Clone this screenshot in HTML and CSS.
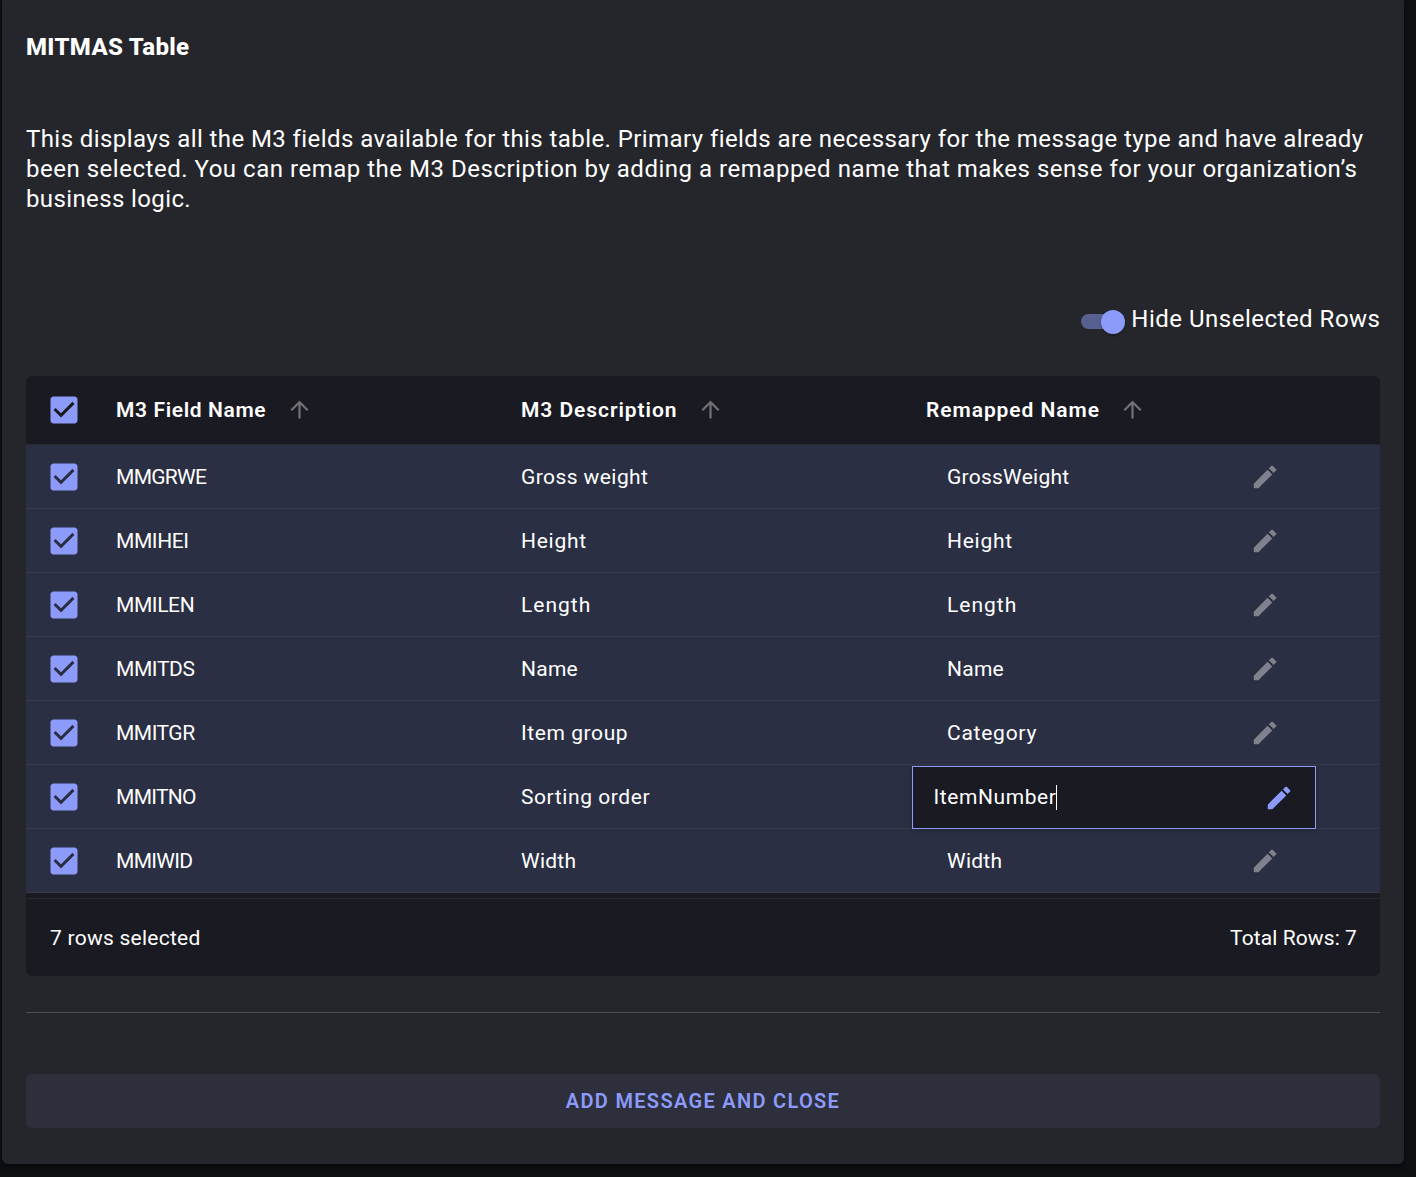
FILE: index.html
```html
<!DOCTYPE html>
<html lang="en">
<head>
<meta charset="utf-8">
<title>MITMAS Table</title>
<link rel="stylesheet" href="styles.css">
</head>
<body>
<svg class="symbols" aria-hidden="true">
  <symbol id="check" viewBox="0 0 24 24"><path d="M19 3H5c-1.11 0-2 .9-2 2v14c0 1.1.89 2 2 2h14c1.11 0 2-.9 2-2V5c0-1.1-.89-2-2-2zm-9 14l-5-5 1.41-1.41L10 14.17l7.59-7.59L19 8l-9 9z"/></symbol>
  <symbol id="arrow" viewBox="0 0 24 24"><path d="M4 12l1.41 1.41L11 7.83V20h2V7.83l5.58 5.59L20 12l-8-8-8 8z"/></symbol>
  <symbol id="edit" viewBox="0 0 24 24"><path d="M3 17.46v3.04c0 .28.22.5.5.5h3.04c.13 0 .26-.05.35-.15L17.81 9.94l-3.75-3.75L3.15 17.1c-.1.1-.15.22-.15.36zM20.71 7.04a1 1 0 0 0 0-1.41l-2.34-2.34a1 1 0 0 0-1.41 0l-1.83 1.83 3.75 3.75 1.83-1.83z"/></symbol>
</svg>
<main class="panel">
  <h1 class="title">MITMAS Table</h1>
  <p class="intro"><span class="l1">This displays all the M3 fields available for this table. Primary fields are necessary for the message type and have already</span> <span class="l2">been selected. You can remap the M3 Description by adding a remapped name that makes sense for your organization’s</span> <span class="l3">business logic.</span></p>
  <div class="toggle-row"><span class="switch"><span class="thumb"></span></span><span class="toggle-label">Hide Unselected Rows</span></div>

  <section class="grid">
    <div class="row head">
      <svg class="check"><use href="#check"/></svg>
      <div class="cell"><span class="h1">M3 Field Name</span><svg class="arrow"><use href="#arrow"/></svg></div>
      <div class="cell"><span class="h2">M3 Description</span><svg class="arrow"><use href="#arrow"/></svg></div>
      <div class="cell"><span class="h3">Remapped Name</span><svg class="arrow"><use href="#arrow"/></svg></div>
    </div>
    <div class="row"><svg class="check"><use href="#check"/></svg><div class="cell s0">MMGRWE</div><div class="cell s3">Gross weight</div><div class="cell name s2">GrossWeight<svg class="edit"><use href="#edit"/></svg></div></div>
    <div class="row"><svg class="check"><use href="#check"/></svg><div class="cell s1">MMIHEI</div><div class="cell s4">Height</div><div class="cell name s4">Height<svg class="edit"><use href="#edit"/></svg></div></div>
    <div class="row"><svg class="check"><use href="#check"/></svg><div class="cell s1">MMILEN</div><div class="cell s5">Length</div><div class="cell name s5">Length<svg class="edit"><use href="#edit"/></svg></div></div>
    <div class="row"><svg class="check"><use href="#check"/></svg><div class="cell s1">MMITDS</div><div class="cell s2">Name</div><div class="cell name s2">Name<svg class="edit"><use href="#edit"/></svg></div></div>
    <div class="row"><svg class="check"><use href="#check"/></svg><div class="cell s01">MMITGR</div><div class="cell s35">Item group</div><div class="cell name s4">Category<svg class="edit"><use href="#edit"/></svg></div></div>
    <div class="row"><svg class="check"><use href="#check"/></svg><div class="cell s0">MMITNO</div><div class="cell s35">Sorting order</div><div class="cell name editing s35">ItemNumber<span class="caret"></span><svg class="edit"><use href="#edit"/></svg></div></div>
    <div class="row"><svg class="check"><use href="#check"/></svg><div class="cell s0">MMIWID</div><div class="cell s2">Width</div><div class="cell name s2">Width<svg class="edit"><use href="#edit"/></svg></div></div>
    <div class="foot"><span class="s2">7 rows selected</span><span class="total">Total Rows: 7</span></div>
  </section>
  <hr class="rule">
  <button class="submit">ADD MESSAGE AND CLOSE</button>
</main>
</body>
</html>
```
FILE: styles.css
```css
* { box-sizing: border-box; }
html { background: #0f1014; }
body {
  margin: 0;
  height: 1177px;
  overflow: hidden;
  color: #fff;
  font-family: Roboto, "Liberation Sans", sans-serif;
}
svg { flex: none; fill: currentColor; }
.symbols { position: absolute; width: 0; height: 0; }

.panel {
  width: 1402px;
  height: 1164px;
  margin-left: 2px;
  padding: 32px 24px 36px;
  background: #25262b;
  border-radius: 0 0 6px 6px;
  box-shadow: 0 3px 5px rgba(0, 0, 0, .55);
}
.title { margin: 0; font-size: 24px; line-height: 30px; font-weight: 800; letter-spacing: .33px; }
.intro { margin: 62px 0 0; font-size: 24px; line-height: 30px; }
.intro span { display: block; white-space: nowrap; }
.l1 { letter-spacing: .417px; }
.l2 { letter-spacing: .515px; }
.l3 { letter-spacing: .38px; }

.toggle-row { display: flex; justify-content: flex-end; align-items: center; height: 30px; margin-top: 90px; }
.toggle-label { font-size: 24px; line-height: 30px; letter-spacing: .5px; margin: 0 -.5px 0 6.5px; }
.switch { display: flex; justify-content: flex-end; align-items: center; width: 44px; height: 15px; margin-top: 5px; border-radius: 8px; background: linear-gradient(90deg, #585f91 32px, transparent 32px); }
.thumb { width: 24px; height: 24px; border-radius: 50%; background: #8c9bfa; box-shadow: 0 2px 2px rgba(0, 0, 0, .25); }

.grid { height: 600px; margin-top: 42px; border-radius: 6px; background: #1a1a22; overflow: hidden; font-size: 21px; }
.row { display: grid; grid-template-columns: 75px 405px 405px 1fr; align-items: center; height: 64px; background: #2b2f43; border-bottom: 1px solid #383a47; }
.head { height: 69px; background: none; border-color: #28292c; font-weight: 600; }
.check { width: 36px; height: 36px; margin-left: 20px; color: #8c9bfa; }
.cell { display: flex; align-items: center; height: 63px; padding-left: 15px; white-space: nowrap; }
.head .cell { padding-bottom: 1px; }
.head .cell span { flex: none; }
.arrow { width: 27px; height: 27px; margin-left: auto; color: #707075; }
.head .cell:nth-child(2) { width: 212px; }
.head .cell:nth-child(3) { width: 218px; }
.head .cell:nth-child(4) { width: 235px; }
.name { width: 405px; padding: 0 36px; }
.edit { width: 30px; height: 30px; margin: 1px 0 0 auto; color: #7f818c; }
.editing { width: 404px; margin: 1px 0 -1px 1px; padding: 0 21px 1px 20.5px; background: #1a1a22; border: 1px solid #8c9bfa; box-shadow: 0 2px 5px rgba(0, 0, 0, .25); }
.editing .edit { color: #8c9bfa; }
.caret { width: 1px; height: 25px; background: #fff; }

.foot { display: flex; justify-content: space-between; align-items: center; height: 78px; margin-top: 5px; padding: 0 23px 0 24px; border-top: 1px solid #28292c; }
.total { letter-spacing: .09px; }
.rule { height: 1px; margin: 36px 0 61px; border: 0; background: #4f4d50; }
.submit { display: block; width: 100%; height: 54px; padding: 0; border: 0; border-radius: 6px; background: #2e2f3d; color: #8c9bfa; font: 600 20px/54px Roboto, sans-serif; letter-spacing: 1.32px; }

/* tracking steps */
.s0 { letter-spacing: -.7px; }
.s01 { letter-spacing: -.5px; }
.s1 { letter-spacing: -.4px; }
.s2 { letter-spacing: .25px; }
.s3 { letter-spacing: .42px; }
.s35 { letter-spacing: .58px; }
.s4 { letter-spacing: .75px; }
.s5 { letter-spacing: 1px; }
.h1 { letter-spacing: .63px; }
.h2 { letter-spacing: .94px; }
.h3 { letter-spacing: .93px; }
```
